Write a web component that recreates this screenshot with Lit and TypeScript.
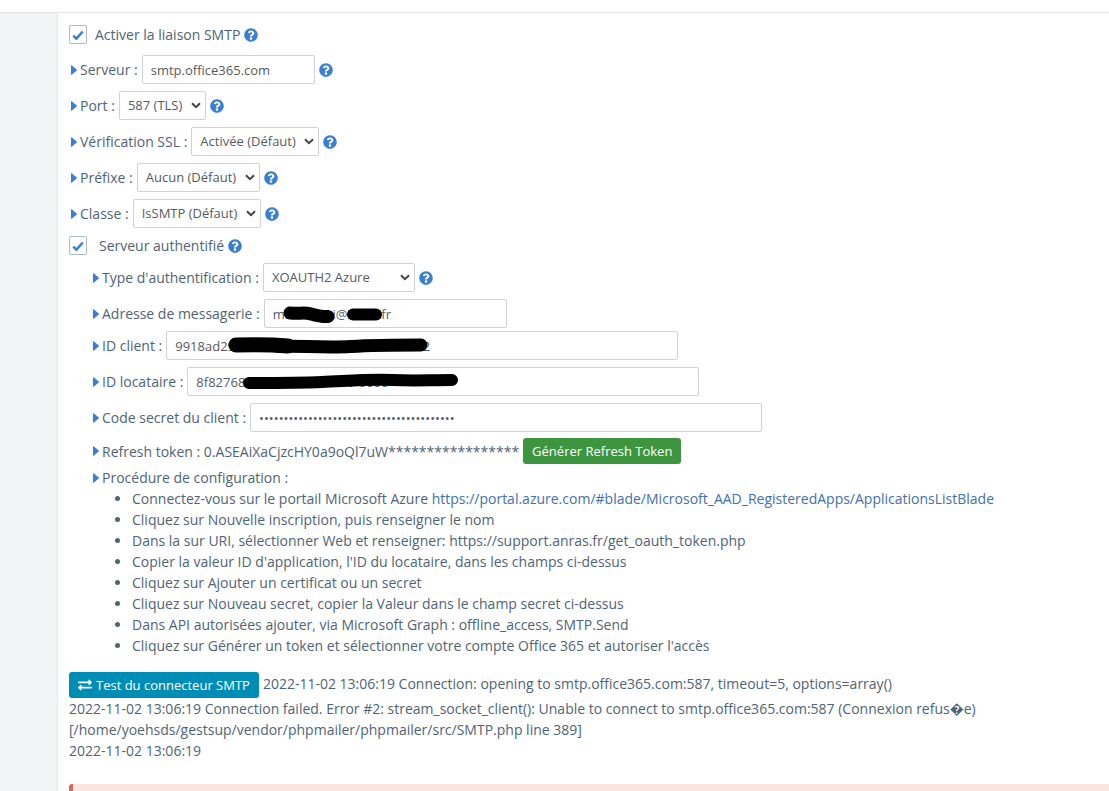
import { LitElement, html, svg, css } from "lit";
import { customElement } from "lit/decorators.js";

const caret = html`<svg class="caret" viewBox="0 0 6 10" aria-hidden="true"><path d="M0 0.600 Q0 0 0.700 0.300 L5.700 4.500 Q6.200 5 5.700 5.500 L0.700 9.700 Q0 10 0 9.400 Z" /></svg>`;

const help = html`<svg class="help" viewBox="0 0 512 512" role="img" aria-label="Aide">
  <path d="M504 256c0 137-111 248-248 248S8 393 8 256 119 8 256 8s248 111 248 248zM262.700 90c-54.500 0-89.300 23-116.500 63.800-3.500 5.300-2.400 12.400 2.700 16.300l34.700 26.300c5.200 3.900 12.600 3 16.700-2.100 17.900-22.700 30.100-35.800 57.300-35.800 20.400 0 45.700 13.100 45.700 33 0 15-12.400 22.700-32.500 34C247.100 238.500 216 254.900 216 296v4c0 6.600 5.400 12 12 12h56c6.600 0 12-5.400 12-12v-1.300c0-28.500 83.200-29.600 83.200-106.700 0-58-60.200-102-116.500-102zM256 338c-25.400 0-46 20.600-46 46 0 25.400 20.600 46 46 46s46-20.600 46-46c0-25.400-20.600-46-46-46z" /></svg>`;

const exchange = html`<svg class="exchange" viewBox="0 0 512 512" aria-hidden="true">
  <path d="M0 168v-16c0-13.255 10.745-24 24-24h360V80c0-21.367 25.899-32.042 40.971-16.971l80 80c9.372 9.373 9.372 24.569 0 33.941l-80 80C409.956 271.982 384 261.456 384 240v-48H24c-13.255 0-24-10.745-24-24zm488 152H128v-48c0-21.314-25.862-32.080-40.971-16.971l-80 80c-9.372 9.373-9.372 24.569 0 33.941l80 80C102.057 463.997 128 453.437 128 432v-48h360c13.255 0 24-10.745 24-24v-16c0-13.255-10.745-24-24-24z" /></svg>`;

const steps = [
  "Cliquez sur Nouvelle inscription, puis renseigner le nom",
  "Dans la sur URI, sélectionner Web et renseigner: https://support.anras.fr/get_oauth_token.php",
  "Copier la valeur ID d'application, l'ID du locataire, dans les champs ci-dessus",
  "Cliquez sur Ajouter un certificat ou un secret",
  "Cliquez sur Nouveau secret, copier la Valeur dans le champ secret ci-dessus",
  "Dans API autorisées ajouter, via Microsoft Graph : offline_access, SMTP.Send",
  "Cliquez sur Générer un token et sélectionner votre compte Office 365 et autoriser l'accès",
];

const portal = "https://portal.azure.com/#blade/Microsoft_AAD_RegisteredApps/ApplicationsListBlade";

@customElement("app-root")
export class AppRoot extends LitElement {
  static styles = css`
    :host {
      display: flex;
      flex-direction: column;
      height: 100vh;
      overflow: hidden;
      background: #fff;
      color: #4f6475;
      font: 14px/21px "Open Sans", sans-serif;
    }
    * { box-sizing: border-box; }
    .topbar { flex: none; height: 13px; border-bottom: 1px solid #e2e4e6; }
    .body { flex: 1; display: flex; min-height: 0; }
    .side { flex: none; width: 58px; background: #f2f3f5; border-right: 1px solid #e4e6e8; }
    .main { flex: 1; min-width: 0; padding: 11px 0 0 11px; }
    .group { display: flex; flex-direction: column; gap: 7px; }
    .row { display: flex; align-items: center; gap: 4px; }
    .check { min-height: 21px; }
    .first { margin-bottom: 3px; }
    .check input {
      appearance: none;
      flex: none;
      width: 18px;
      height: 19px;
      margin: 0 4px 0 0;
      border: 1px solid #a9b9c6;
      border-radius: 2px;
      background: #fff url("data:image/svg+xml,%3Csvg xmlns='http://www.w3.org/2000/svg' viewBox='0 0 12 12'%3E%3Cpath d='M1.200 6.600 4.400 9.600 10.800 2.500' fill='none' stroke='%23377fdc' stroke-width='2.500'/%3E%3C/svg%3E") center / 12px 12px no-repeat;
    }
    .auth input { margin-right: 8px; }
    .caret { flex: none; width: 6px; height: 10px; margin: 0 -1px 0 2px; fill: #3b7fd0; }
    .help { flex: none; width: 14px; height: 14px; fill: #3b7fd0; }
    .control {
      height: 29px;
      margin: 0;
      padding: 0 8px;
      border: 1px solid #cfd2d4;
      border-radius: 2px;
      background: #fff;
      color: #565c62;
      font: 13px/21px "Open Sans", sans-serif;
      outline: 0;
    }
    select.control {
      appearance: none;
      padding-right: 22px;
      background: #fff url("data:image/svg+xml,%3Csvg xmlns='http://www.w3.org/2000/svg' viewBox='0 0 10 7'%3E%3Cpath d='M1 1.200 5 5.200 9 1.200' fill='none' stroke='%23444' stroke-width='2'/%3E%3C/svg%3E") right 4px center / 10px 7px no-repeat;
    }
    .w-server { width: 173px; }
    .w-type { width: 152px; }
    .w-mail { width: 243px; }
    .w-id { width: 512px; }
    .sub { padding-left: 22px; }
    .tight { margin-top: -4px; }
    .masked { position: relative; display: flex; }
    .scribble { position: absolute; left: 0; top: 0; height: 29px; width: 300px; fill: none; stroke: #000; stroke-linecap: round; stroke-linejoin: round; pointer-events: none; }
    .btn { border: 0; border-radius: 3px; color: #fff; height: 26px; padding: 0 9px; font: 500 13px/21px "Open Sans", sans-serif; }
    .green { background: #3d9540; }
    .blue { background: #008db5; display: inline-flex; align-items: center; gap: 4px; margin-right: 4px; vertical-align: middle; }
    .exchange { width: 14px; height: 14px; fill: #fff; }
    .steps { margin: 0; padding: 0 0 0 41px; }
    .steps a { color: #4271ae; text-decoration: none; }
    .token { margin-top: -1px; }
    .proc { margin-top: -4px; }
    .log { margin-top: 16px; }
    .log p { margin: 0; overflow-wrap: anywhere; }
    .alert { margin-top: 23px; height: 60px; background: #fae5e1; border-left: 4px solid #d2695c; border-radius: 3px 0 0 3px; }
  `;

  private select(id: string, label: string, value: string, extra = "") {
    return html`<div class="row">${caret}<label for=${id}>${label} :</label>
      <select class="control ${extra}" id=${id}><option>${value}</option></select>${help}</div>`;
  }

  private scribble(strokes: [string, number][]) {
    return html`<svg class="scribble" viewBox="0 0 300 29" aria-hidden="true">
      ${strokes.map(([d, w]) => svg`<path d=${d} stroke-width=${w} />`)}</svg>`;
  }

  render() {
    return html`
      <header class="topbar"></header>
      <div class="body">
        <aside class="side"></aside>
        <main class="main">
          <div class="group">
            <div class="row check first"><input type="checkbox" id="smtp" checked /><label for="smtp">Activer la liaison SMTP</label>${help}</div>
            <div class="row">${caret}<label for="server">Serveur :</label><input class="control w-server" id="server" value="smtp.office365.com" />${help}</div>
            ${this.select("port", "Port", "587 (TLS)")}
            ${this.select("ssl", "Vérification SSL", "Activée (Défaut)")}
            ${this.select("prefix", "Préfixe", "Aucun (Défaut)")}
            ${this.select("class", "Classe", "IsSMTP (Défaut)")}
            <div class="row check auth"><input type="checkbox" id="auth" checked /><label for="auth">Serveur authentifié</label>${help}</div>
            <div class="group sub">
              ${this.select("type", "Type d'authentification", "XOAUTH2 Azure", "w-type")}
              <div class="row">${caret}<label for="mail">Adresse de messagerie :</label>
                <div class="masked"><input class="control w-mail" id="mail" value="mnnnnoni@innnl.fr" />
                ${this.scribble([["M26 14 C36 15 40 13 47 15 S58 18 64 17.500", 13], ["M89 15.500 H112", 12]])}</div></div>
              <div class="row tight">${caret}<label for="client">ID client :</label>
                <div class="masked"><input class="control w-id" id="client" value="9918ad29-0000-0000-0000-000000000002" />
                ${this.scribble([["M70 14 C90 13.500 105 13.500 122 15", 15], ["M110 15 C140 15 160 17 185 15.500 S230 14 255 14", 13]])}</div></div>
              <div class="row">${caret}<label for="tenant">ID locataire :</label>
                <div class="masked"><input class="control w-id" id="tenant" value="8f827680-0000-0000-0000-0000" />
                ${this.scribble([["M62 16 C90 16 110 16 135 15 S180 12 205 13 S240 13 265 13", 12]])}</div></div>
              <div class="row">${caret}<label for="secret">Code secret du client :</label><input class="control w-id" id="secret" type="password" value="0000000000000000000000000000000000000000" /></div>
              <div class="row token">${caret}<span>Refresh token : 0.ASEAiXaCjzcHY0a9oQl7uW*****************</span><button class="btn green">Générer Refresh Token</button></div>
              <div class="proc">
                <div class="row">${caret}<span>Procédure de configuration :</span></div>
                <ul class="steps">
                  <li>Connectez-vous sur le portail Microsoft Azure <a href=${portal}>${portal}</a></li>
                  ${steps.map((s) => html`<li>${s}</li>`)}
                </ul>
              </div>
            </div>
          </div>
          <div class="log">
            <p><button class="btn blue">${exchange}Test du connecteur SMTP</button>2022-11-02 13:06:19 Connection: opening to smtp.office365.com:587, timeout=5, options=array()</p>
            <p>2022-11-02 13:06:19 Connection failed. Error #2: stream_socket_client(): Unable to connect to smtp.office365.com:587 (Connexion refus\uFFFDe)<br />[/home/yoehsds/gestsup/vendor/phpmailer/phpmailer/src/SMTP.php line 389]<br />2022-11-02 13:06:19</p>
          </div>
          <div class="alert"></div>
        </main>
      </div>
    `;
  }
}
